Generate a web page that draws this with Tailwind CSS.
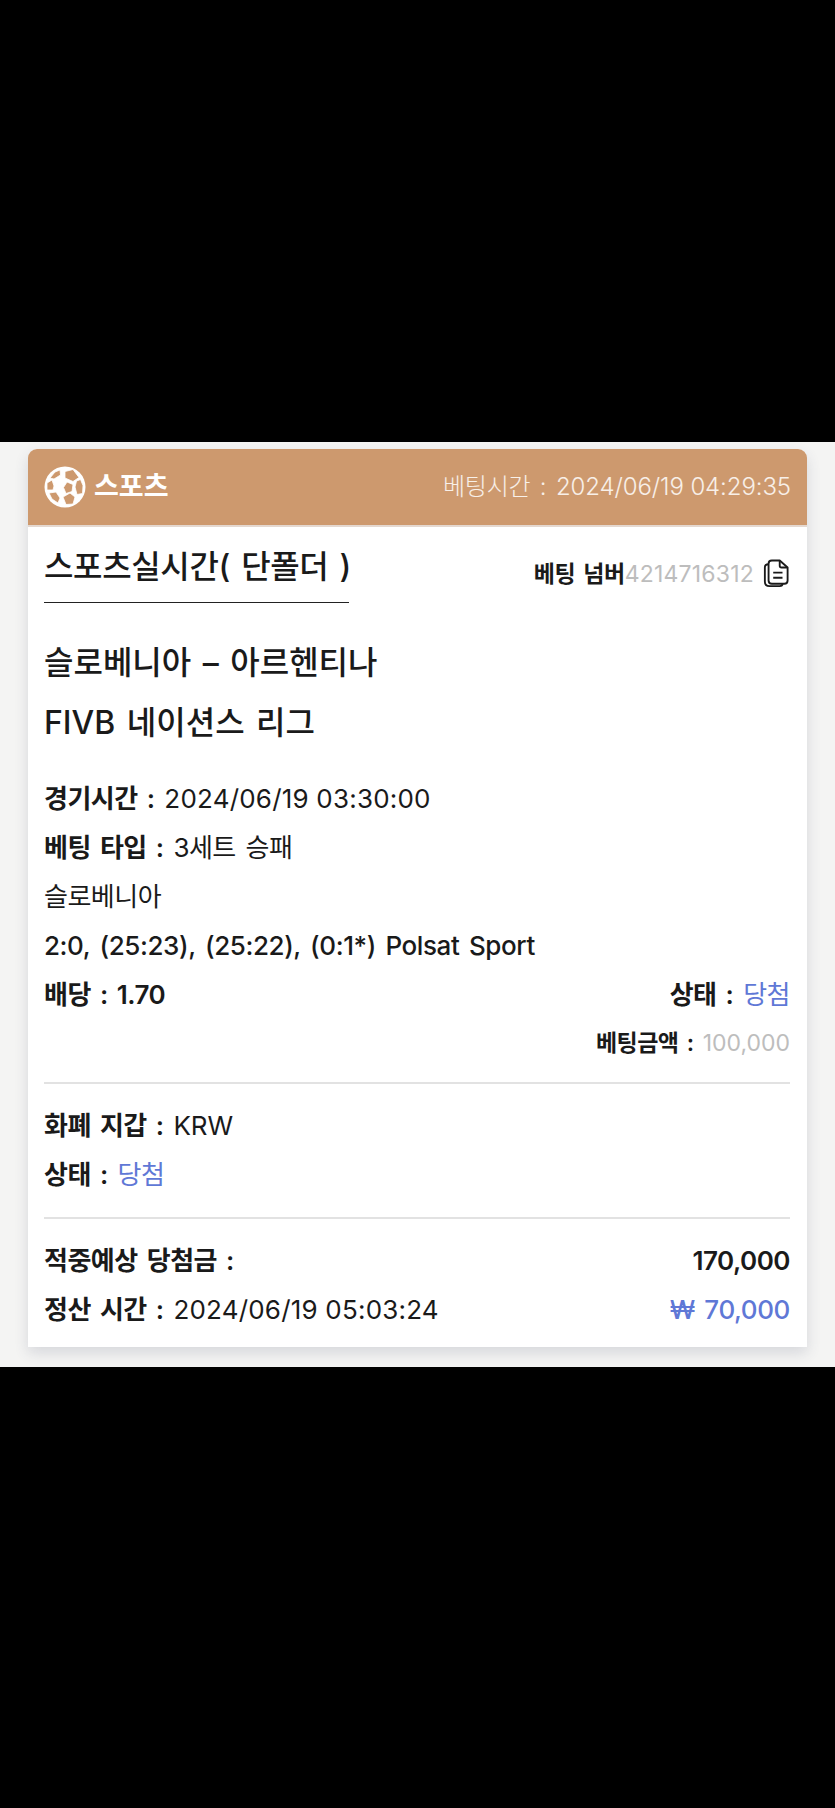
<!DOCTYPE html>
<html lang="ko">
<head>
    <meta charset="UTF-8">
    <meta name="viewport" content="width=device-width, initial-scale=1.0">
    <title>Betting Detail</title>
    <script src="https://cdn.jsdelivr.net/npm/@tailwindcss/browser@4"></script>
</head>
<body class="bg-black h-[1808px] pt-[442px] overflow-hidden font-['Inter','Noto_Sans_CJK_KR',sans-serif] text-[26px] text-[#1a1a1a] tracking-[-0.5px] [word-spacing:3px]">

    <!-- Gray band -->
    <div class="bg-[#f4f4f3] h-[925px] px-[28px] pt-[7px]">

        <!-- Card -->
        <div class="bg-white rounded-t-[9px] h-[898px] shadow-[0_6px_14px_rgba(60,70,100,0.16)]">

            <!-- Header -->
            <div class="bg-[#cd996e] rounded-t-[9px] h-[78px] border-b-2 border-[#e4d8d0] pl-[16px] pr-[16px] flex items-center justify-between text-white">
                <div class="flex items-center gap-[8px]">
                    <svg class="w-[42px] h-[42px]" viewBox="0 0 42 42">
                        <circle cx="21" cy="21" r="20.500" fill="#fff"/>
                        <g fill="#cd996e" stroke="#fff" stroke-width="0.8" stroke-linejoin="round">
                            <path d="M21 5.500l8-2 6 8-6 4-8-3.500z"/>
                            <path d="M23 16l6 2.500-1 7-6 2-2.500-6z"/>
                            <path d="M32.500 15l4-1.500 2.500 6-.5 8-5.500 1-2-7.500z"/>
                            <path d="M19 31l7-4 5 4-2 7-7 .5z"/>
                            <path d="M5 27l7-1 4 6-2 5-6-4z"/>
                            <path d="M3 17l5-3 2 6-1 4-6 0z"/>
                            <path d="M6 12l5-6 5-2 .5 5-6.500 4z"/>
                        </g>
                    </svg>
                    <span class="font-semibold text-[27px] tracking-normal">스포츠</span>
                </div>
                <span class="text-[24px] text-white/85 font-light tracking-[-0.25px]">베팅시간 : <span class="[word-spacing:0] tracking-[-0.1px]">2024/06/19 04:29:35</span></span>
            </div>

            <div class="pl-[16px] pr-[17px]">
                <!-- Title row -->
                <div class="flex items-start justify-between pt-[20px]">
                    <div class="w-[305px] h-[56px] border-b border-[#222] text-[32px] font-medium leading-[40px] tracking-[-0.35px] whitespace-nowrap">스포츠실시간( 단폴더 )</div>
                    <div class="flex items-center h-[40px] mt-[7px] text-[23px]">
                        <span class="font-semibold">베팅 넘버</span>
                        <span class="text-[#bdbdbd] tracking-[0.2px]">4214716312</span>
                        <svg class="w-[26px] h-[30px] ml-[9px] mr-[1px]" viewBox="0 0 28 32" fill="none" stroke="#1a1a1a" stroke-width="2" stroke-linejoin="round">
                            <path d="M6 5.500C3 5.500 2 7 2 9v15c0 3 2 5 5 5h11c2 0 3-1 3-2.500"/>
                            <path d="M6 5c0-2 1.500-3.500 3.500-3.500H18L26.500 9v14c0 2-1.500 3.500-3.500 3.500H9.500C7.500 26.500 6 25 6 23z"/>
                            <path d="M18 2v5c0 1 1 2 2 2h6M11 14.500h10M11 20h10"/>
                        </svg>
                    </div>
                </div>

                <!-- Match names -->
                <div class="mt-[30px] text-[32px] font-medium leading-[60px] tracking-normal">
                    <div>슬로베니아 – 아르헨티나</div>
                    <div>FIVB 네이션스 리그</div>
                </div>

                <!-- Details -->
                <div class="mt-[21px] leading-[49px]">
                    <div><span class="font-semibold">경기시간 :</span> <span class="tracking-[0.2px] [word-spacing:0]">2024/06/19 03:30:00</span></div>
                    <div><span class="font-semibold">베팅 타입 :</span> 3세트 승패</div>
                    <div>슬로베니아</div>
                    <div class="font-medium tracking-[-0.4px]">2:0, (25:23), (25:22), (0:1*) Polsat Sport</div>
                    <div class="flex justify-between">
                        <span class="font-semibold">배당 : 1.70</span>
                        <span><span class="font-semibold">상태 :</span> <span class="text-[#5f78d6]">당첨</span></span>
                    </div>
                    <div class="text-right text-[23px]"><span class="font-semibold">베팅금액 :</span> <span class="text-[#bdbdbd] tracking-normal">100,000</span></div>
                </div>

                <div class="border-t-2 border-[#e2e2e2] mt-[14px] pt-[17px] leading-[49px]">
                    <div><span class="font-semibold">화폐 지갑 :</span> <span class="tracking-normal">KRW</span></div>
                    <div><span class="font-semibold">상태 :</span> <span class="text-[#5f78d6]">당첨</span></div>
                </div>

                <div class="border-t-2 border-[#e2e2e2] mt-[18px] pt-[17px] leading-[49px]">
                    <div class="flex justify-between font-semibold">
                        <span>적중예상 당첨금 :</span>
                        <span>170,000</span>
                    </div>
                    <div class="flex justify-between">
                        <span><span class="font-semibold">정산 시간 :</span> <span class="tracking-[0.2px] [word-spacing:0]">2024/06/19 05:03:24</span></span>
                        <span class="font-medium text-[#5f78d6] tracking-[-0.4px]">₩ 70,000</span>
                    </div>
                </div>
            </div>
        </div>
    </div>

</body>
</html>
